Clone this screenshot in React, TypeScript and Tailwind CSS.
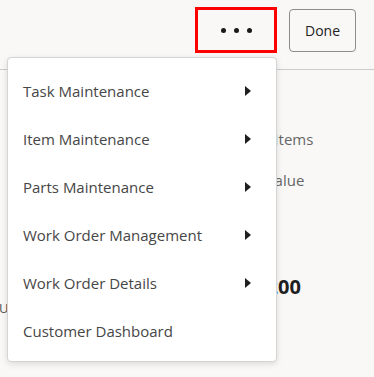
import React from 'react';

const menuItems = [
  { label: 'Task Maintenance', sub: true },
  { label: 'Item Maintenance', sub: true },
  { label: 'Parts Maintenance', sub: true },
  { label: 'Work Order Management', sub: true },
  { label: 'Work Order Details', sub: true },
  { label: 'Customer Dashboard', sub: false },
];

function Caret() {
  return (
    <svg width="6" height="10" viewBox="0 0 6 10" className="text-[#1f1f1f]">
      <path d="M0 0 L6 5 L0 10 Z" fill="currentColor" />
    </svg>
  );
}

export default function App() {
  return (
    <div className="relative w-[374px] h-[377px] overflow-hidden bg-[#f9f8f7] font-['Open_Sans',sans-serif]">
      {/* Header */}
      <header className="flex items-start justify-end gap-3 h-[70px] pt-[7px] pr-[18px] border-b border-[#cbcbcb]">
        <button
          type="button"
          className="w-[82px] h-[46px] border-[3px] border-[#ff0000] flex items-center justify-center gap-[8px]"
        >
          <span className="w-[5px] h-[5px] rounded-full bg-[#1a1a1a]" />
          <span className="w-[5px] h-[5px] rounded-full bg-[#1a1a1a]" />
          <span className="w-[5px] h-[5px] rounded-full bg-[#1a1a1a]" />
        </button>
        <button
          type="button"
          className="mt-[2px] w-[67px] h-[43px] rounded-[4px] border border-[#8c8c8c] bg-[#f9f8f7] text-[14px] text-[#222]"
        >
          Done
        </button>
      </header>

      {/* Page content (mostly under the menu) */}
      <div className="flex pt-[59px]">
        <div className="w-[232px] pt-[170px] text-[13px] text-[#555]">
          <p className="-ml-[1px]">U.S.</p>
        </div>
        <div className="flex flex-col text-[15px] text-[#666]">
          <p className="leading-[20px]">Open Items</p>
          <p className="mt-[21px] -ml-[5px] leading-[20px]">Total Value</p>
          <p className="mt-[82px] ml-[6px] text-[20px] font-bold text-[#1f1f1f]">$4,200</p>
        </div>
      </div>

      {/* Overflow menu */}
      <div className="absolute left-[7px] top-[57px] w-[270px] h-[305px] bg-white border border-[#d4d4d4] rounded-[4px] shadow-[0_2px_6px_rgba(0,0,0,0.12)] pt-[9px]">
        {menuItems.map((item) => (
          <div
            key={item.label}
            className="flex items-center justify-between h-[48px] pl-[15px] pr-[25px] text-[15px] text-[#464646]"
          >
            <span>{item.label}</span>
            {item.sub && <Caret />}
          </div>
        ))}
      </div>
    </div>
  );
}
